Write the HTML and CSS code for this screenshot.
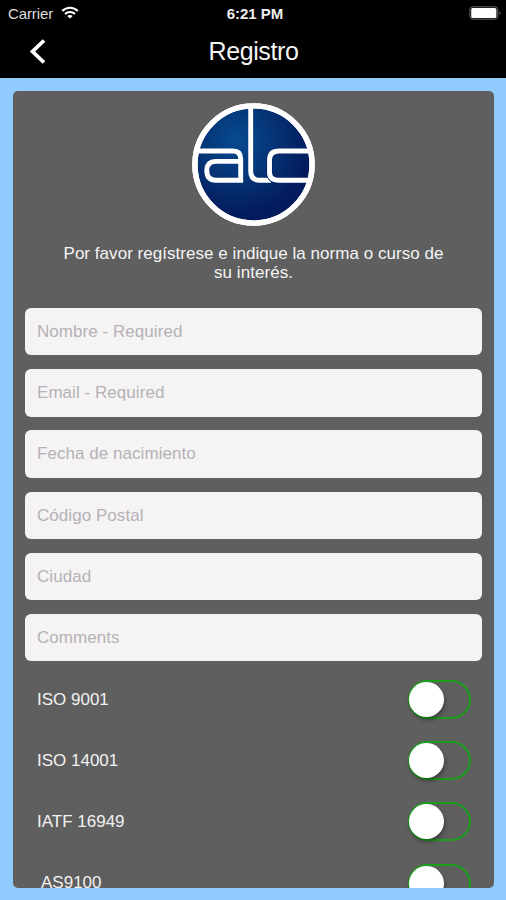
FILE: index.html
```html
<!DOCTYPE html>
<html lang="es">
<head>
<meta charset="utf-8">
<title>Registro</title>
<link rel="stylesheet" href="styles.css">
</head>
<body>
<header class="header">
  <div class="status">
    <div class="carrier"><span class="carrier-name">Carrier</span>
      <svg class="wifi" viewBox="0 0 18 13"><path d="M1.2 5C5.6.7 12.4.7 16.8 5M4 8c2.8-2.7 7.2-2.7 10 0" fill="none" stroke="#fff" stroke-width="2.1"/><path d="M9 12.6 6.3 9.9c1.5-1.3 3.9-1.3 5.4 0z" fill="#fff"/></svg>
    </div>
    <span class="time">6:21 PM</span>
    <svg class="battery" viewBox="0 0 33 14"><rect x=".8" y=".8" width="28" height="12.4" rx="3" fill="none" stroke="#666" stroke-width="1"/><rect x="2.2" y="2.1" width="25.2" height="9.8" rx="1.5" fill="#fff"/><path d="M30.5 5.2q2 1.8 0 3.6z" fill="#888"/></svg>
  </div>
  <div class="nav">
    <svg class="back" viewBox="0 0 16 25"><path d="M14 1.5 2.6 12.5 14 23.5" fill="none" stroke="#fff" stroke-width="3.8"/></svg>
    <h1 class="title">Registro</h1>
  </div>
</header>
<main class="page">
  <section class="card">
    <svg class="logo" viewBox="0 0 123 123">
      <defs><radialGradient id="disc" cx=".36" cy=".3" r=".62"><stop offset="0" stop-color="#064a90"/><stop offset=".5" stop-color="#053577"/><stop offset="1" stop-color="#041c5e"/></radialGradient></defs>
      <circle cx="61.5" cy="61.5" r="58.6" fill="url(#disc)" stroke="#fff" stroke-width="5.4"/>
      <g fill="none" stroke="#fff" stroke-width="4.9">
        <path d="M5 48H41Q48.7 48 48.7 56V77.3H24Q14.8 77 14.8 67.7T24 58.4H48.7"/>
        <path d="M58.7 4V68Q58.7 77.3 68 77.3H79"/>
        <path d="M119 48H87Q77.5 48 77.5 57V69Q77.5 77.3 87 77.3H117" stroke="#04246a" stroke-width="6.4"/>
        <path d="M119 48H87Q77.5 48 77.5 57V69Q77.5 77.3 87 77.3H117"/>
      </g>
      <circle cx="61.5" cy="61.5" r="58.6" fill="none" stroke="#fff" stroke-width="5.4"/>
    </svg>
    <p class="intro">Por favor regístrese e indique la norma o curso de<br>su interés.</p>
    <form class="form">
      <div class="field"><span>Nombre - Required</span></div>
      <div class="field"><span>Email - Required</span></div>
      <div class="field"><span>Fecha de nacimiento</span></div>
      <div class="field"><span>Código Postal</span></div>
      <div class="field"><span>Ciudad</span></div>
      <div class="field"><span>Comments</span></div>
      <div class="option"><span>ISO 9001</span><i class="switch"></i></div>
      <div class="option"><span>ISO 14001</span><i class="switch"></i></div>
      <div class="option"><span>IATF 16949</span><i class="switch"></i></div>
      <div class="option"><span class="indent">AS9100</span><i class="switch"></i></div>
    </form>
  </section>
</main>
</body>
</html>
```
FILE: styles.css
```css
* { box-sizing: border-box; }
body {
  margin: 0;
  height: 900px;
  display: flex;
  flex-direction: column;
  overflow: hidden;
  background: #8fcbfc;
  font-family: "Liberation Sans", Arial, sans-serif;
}
.header { height: 78px; flex: none; background: #000; color: #fff; }
.status {
  height: 26px;
  display: grid;
  grid-template-columns: 1fr auto 1fr;
  align-items: center;
  padding: 0 4px 0 8px;
}
.carrier { display: flex; align-items: center; gap: 8px; font-size: 15px; letter-spacing: -.1px; color: #ddd; }
.wifi { width: 18px; height: 13px; margin-top: -2px; }
.time { font-size: 15px; font-weight: bold; color: #eee; }
.battery { width: 33px; height: 14px; justify-self: end; }
.nav {
  height: 52px;
  display: grid;
  grid-template-columns: 1fr auto 1fr;
  padding: 0 0 0 30px;
}
.back { width: 16px; height: 25px; margin-top: 13px; }
.title { margin: 10px 29px 0 0; font-size: 25px; letter-spacing: -.4px; line-height: 30px; font-weight: normal; color: #f3f3f3; }
.page { flex: 1; min-height: 0; padding: 13px 12px 12px 13px; }
.card {
  height: 797px;
  padding: 11.5px 12px 0;
  overflow: hidden;
  border-radius: 5px;
  background: #5f5f5f;
}
.logo { display: block; width: 123px; height: 123px; margin: 0 auto; }
.intro {
  margin: 18px 0 0;
  height: 64.7px;
  text-align: center;
  font-size: 17px;
  letter-spacing: .04px;
  line-height: 19.5px;
  color: #f4f4f4;
}
.form { display: flex; flex-direction: column; gap: 13.85px; }
.field {
  height: 47.3px;
  flex: none;
  padding: 0 12px;
  border-radius: 6px;
  background: #f5f3f4;
  font-size: 17px;
  letter-spacing: .05px;
  line-height: 47px;
  color: #b4b2b5;
}
.option {
  height: 47.3px;
  flex: none;
  display: flex;
  justify-content: space-between;
  align-items: center;
  padding: 2px 11px 0 12px;
  font-size: 17px;
  color: #f2f2f2;
}
.indent { padding-left: 4px; }
.switch {
  width: 63px;
  height: 39px;
  border: 2.4px solid #1b9e1b;
  border-radius: 20px;
}
.switch::before {
  content: "";
  display: block;
  width: 35px;
  height: 35px;
  margin: 0 0 0 -1px;
  border-radius: 50%;
  background: #fff;
  box-shadow: 1px 3px 4px rgba(0, 0, 0, .35);
}
```
